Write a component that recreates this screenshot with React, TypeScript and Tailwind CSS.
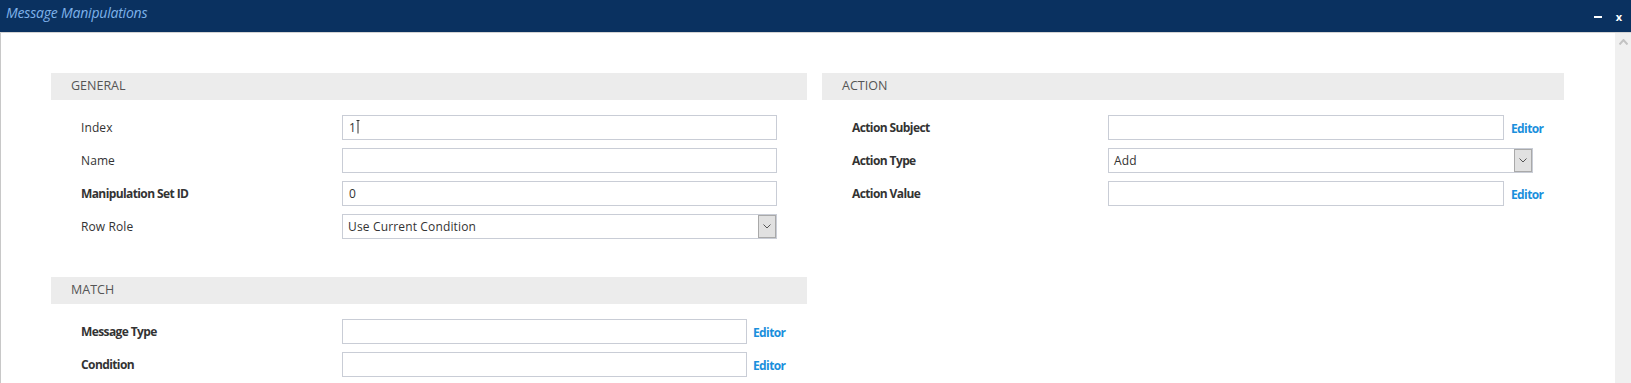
import React from "react";

const font = { fontFamily: '"Open Sans", "Noto Sans", sans-serif' };

function Label({ text, bold, w }: { text: string; bold?: boolean; w: string }) {
  return (
    <div className={`${w} shrink-0 pl-[30px] text-[12px] text-[#333] ${bold ? "font-bold tracking-[-0.6px]" : "tracking-[0.1px]"}`}>{text}</div>
  );
}

function TextBox({ value, w, cursor }: { value?: string; w: string; cursor?: boolean }) {
  return (
    <div className={`${w} h-[25px] border border-[#c9cdd6] bg-white flex items-center pl-[6px] text-[12px] text-[#333]`}>
      <span>{value}</span>
      {cursor && (
        <svg width="4" height="14" viewBox="0 0 4 14" className="-mt-[2px]">
          <path d="M0.5 0.5 H3.5 M2 0.5 V13.5" stroke="#333" strokeWidth="1" fill="none" />
        </svg>
      )}
    </div>
  );
}

function SelectBox({ value, w }: { value: string; w: string }) {
  return (
    <div className={`${w} h-[25px] border border-[#c9cdd6] bg-white flex items-stretch text-[12px] text-[#333]`}>
      <div className="flex-1 flex items-center pl-[5px] tracking-[0.15px]">{value}</div>
      <div className="w-[18px] bg-[#e1e1e1] border border-[#a9a9a9] flex items-center justify-center">
        <svg width="8" height="5" viewBox="0 0 8 5">
          <path d="M0.5 0.5 L4 4 L7.5 0.5" stroke="#555" strokeWidth="1" fill="none" />
        </svg>
      </div>
    </div>
  );
}

function Editor() {
  return <span className="text-[12px] font-bold tracking-[-0.6px] text-[#1a8fdc]">Editor</span>;
}

function Header({ title }: { title: string }) {
  return (
    <div className="h-[27px] bg-[#ececec] flex items-center pl-[20px] text-[12.5px] text-[#555]">{title}</div>
  );
}

function Row({ children }: { children: React.ReactNode }) {
  return <div className="h-[25px] flex items-center">{children}</div>;
}

export default function App() {
  return (
    <div className="w-[1631px] h-[383px] overflow-hidden bg-white flex flex-col" style={font}>
      <div className="h-[32px] shrink-0 bg-[#0a3160] flex items-start justify-between">
        <div className="pl-[6px] pt-[2px] text-[14px] italic text-[#7eb2ea] tracking-[-0.2px]">Message Manipulations</div>
        <div className="flex items-center gap-[14px] pr-[9px] pt-[11px]">
          <div className="w-[8px] h-[2px] bg-white mt-[1px]"></div>
          <span className="text-[11px] font-bold text-white leading-none">x</span>
        </div>
      </div>
      <div className="h-[1px] shrink-0 bg-[#d4d4d4]"></div>
      <div className="flex-1 flex min-h-0">
        <div className="flex-1 border-l border-[#c8c8c8] pl-[50px] pt-[40px] flex gap-[15px]">
          <div className="w-[756px] shrink-0 flex flex-col">
            <Header title="GENERAL" />
            <div className="flex flex-col gap-[8px] mt-[15px]">
              <Row>
                <Label text="Index" w="w-[291px]" />
                <TextBox value="1" w="w-[435px]" cursor />
              </Row>
              <Row>
                <Label text="Name" w="w-[291px]" />
                <TextBox w="w-[435px]" />
              </Row>
              <Row>
                <Label text="Manipulation Set ID" bold w="w-[291px]" />
                <TextBox value="0" w="w-[435px]" />
              </Row>
              <Row>
                <Label text="Row Role" w="w-[291px]" />
                <SelectBox value="Use Current Condition" w="w-[435px]" />
              </Row>
            </div>
            <div className="mt-[38px]">
              <Header title="MATCH" />
            </div>
            <div className="flex flex-col gap-[8px] mt-[15px]">
              <Row>
                <Label text="Message Type" bold w="w-[291px]" />
                <TextBox w="w-[405px]" />
                <div className="ml-[6px] -mt-[2px]"><Editor /></div>
              </Row>
              <Row>
                <Label text="Condition" bold w="w-[291px]" />
                <TextBox w="w-[405px]" />
                <div className="ml-[6px] -mt-[2px]"><Editor /></div>
              </Row>
            </div>
          </div>
          <div className="w-[742px] shrink-0 flex flex-col">
            <Header title="ACTION" />
            <div className="flex flex-col gap-[8px] mt-[15px]">
              <Row>
                <Label text="Action Subject" bold w="w-[286px]" />
                <TextBox w="w-[396px]" />
                <div className="ml-[7px] -mt-[2px]"><Editor /></div>
              </Row>
              <Row>
                <Label text="Action Type" bold w="w-[286px]" />
                <SelectBox value="Add" w="w-[425px]" />
              </Row>
              <Row>
                <Label text="Action Value" bold w="w-[286px]" />
                <TextBox w="w-[396px]" />
                <div className="ml-[7px] -mt-[2px]"><Editor /></div>
              </Row>
            </div>
          </div>
        </div>
        <div className="w-[16px] shrink-0 bg-[#f0f0f0] flex justify-center pt-[6px]">
          <svg width="9" height="6" viewBox="0 0 9 6">
            <path d="M0.5 5.5 L4.5 1 L8.5 5.5" stroke="#c3c3c3" strokeWidth="2" fill="none" />
          </svg>
        </div>
      </div>
    </div>
  );
}
